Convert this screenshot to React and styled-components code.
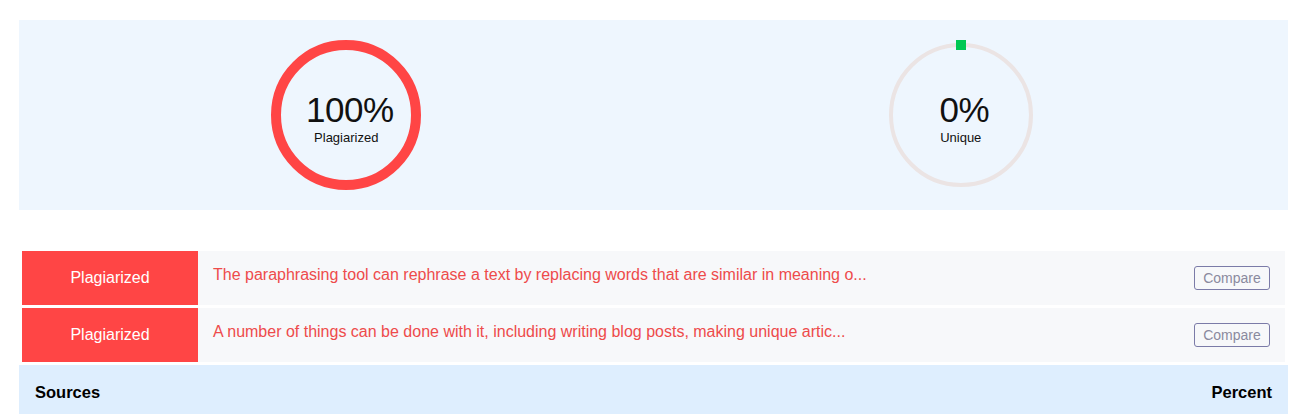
import React from "react";
import styled, { createGlobalStyle } from "styled-components";

const Global = createGlobalStyle`
  html, body { margin: 0; padding: 0; background: #ffffff; }
  body { font-family: "Liberation Sans", Arial, sans-serif; }
`;

const Page = styled.div`
  padding: 20px 16px 0 19px;
  width: 1269px;
`;

const Summary = styled.section`
  background: #eef6fe;
  height: 190px;
  padding: 0 20px;
  display: grid;
  grid-template-columns: 1fr 1fr;
  align-items: center;
`;

const Gauge = styled.div`
  position: relative;
  justify-self: center;
  width: 150px;
  height: 150px;
`;

const GaugeSvg = styled.svg`
  position: absolute;
  inset: 0;
`;

const GaugeLabel = styled.div`
  position: absolute;
  inset: 0;
  display: flex;
  flex-direction: column;
  align-items: center;
  justify-content: center;
  color: #111;
  padding-top: 7px;
`;

const Value = styled.div`
  font-size: 35px;
  line-height: 38px;
  letter-spacing: -0.5px;
  margin-left: 7px;
`;

const Caption = styled.div`
  font-size: 13px;
  line-height: 16px;
  margin-top: 1px;
`;

const Rows = styled.div`
  margin-top: 41px;
  padding: 0 3px;
  display: flex;
  flex-direction: column;
  gap: 3px;
`;

const Row = styled.div`
  display: flex;
  height: 54px;
  background: #f7f8fa;
`;

const Tag = styled.div`
  width: 176px;
  flex: none;
  background: #ff4545;
  color: #fff;
  font-size: 16px;
  display: flex;
  align-items: center;
  justify-content: center;
`;

const Snippet = styled.div`
  flex: 1;
  padding: 14px 0 0 15px;
  color: #ee4b4b;
  font-size: 16px;
  line-height: 20px;
`;

const CompareBtn = styled.button`
  align-self: flex-start;
  margin: 15px 15px 0 0;
  width: 76px;
  height: 24px;
  background: transparent;
  border: 1px solid #7b7ba8;
  border-radius: 3px;
  color: #8a8a9e;
  font-family: "Liberation Sans", Arial, sans-serif;
  font-size: 14px;
  padding: 0;
`;

const Header = styled.div`
  margin-top: 3px;
  background: #deeefe;
  height: 54px;
  padding: 0 16px;
  display: flex;
  align-items: center;
  justify-content: space-between;
  font-weight: bold;
  font-size: 16.5px;
  color: #000;
`;

const rows = [
  "The paraphrasing tool can rephrase a text by replacing words that are similar in meaning o...",
  "A number of things can be done with it, including writing blog posts, making unique artic...",
];

export default function App() {
  return (
    <Page>
      <Global />
      <Summary>
        <Gauge>
          <GaugeSvg width="150" height="150" viewBox="0 0 150 150">
            <circle cx="75" cy="75" r="70" fill="none" stroke="#ff4545" strokeWidth="10" />
          </GaugeSvg>
          <GaugeLabel>
            <Value>100%</Value>
            <Caption>Plagiarized</Caption>
          </GaugeLabel>
        </Gauge>
        <Gauge>
          <GaugeSvg width="150" height="150" viewBox="0 0 150 150">
            <circle cx="75" cy="75" r="70" fill="none" stroke="#ebe4e4" strokeWidth="4" />
            <rect x="70" y="0" width="10" height="10" fill="#00c853" />
          </GaugeSvg>
          <GaugeLabel>
            <Value>0%</Value>
            <Caption>Unique</Caption>
          </GaugeLabel>
        </Gauge>
      </Summary>
      <Rows>
        {rows.map((t, i) => (
          <Row key={i}>
            <Tag>Plagiarized</Tag>
            <Snippet>{t}</Snippet>
            <CompareBtn>Compare</CompareBtn>
          </Row>
        ))}
      </Rows>
      <Header>
        <span>Sources</span>
        <span>Percent</span>
      </Header>
    </Page>
  );
}
